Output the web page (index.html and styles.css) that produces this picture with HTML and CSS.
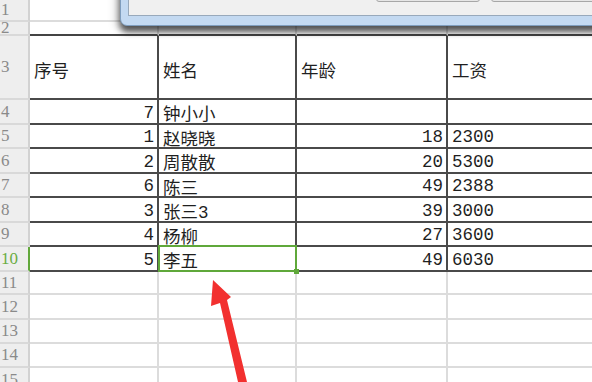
FILE: index.html
```html
<!DOCTYPE html>
<html lang="zh">
<head>
<meta charset="utf-8">
<title>表格</title>
<link rel="stylesheet" href="styles.css">
</head>
<body>
<div class="sheet">
  <div class="rh">1</div><div class="c"></div><div class="c"></div><div class="c"></div><div class="c"></div>
  <div class="rh">2</div><div class="c top"></div><div class="c top"></div><div class="c top"></div><div class="c top"></div>

  <div class="rh">3</div><div class="c d head">序号</div><div class="c d head">姓名</div><div class="c d head">年龄</div><div class="c d head">工资</div>
  <div class="rh">4</div><div class="c d num">7</div><div class="c d">钟小小</div><div class="c d num"></div><div class="c d"></div>
  <div class="rh">5</div><div class="c d num">1</div><div class="c d">赵晓晓</div><div class="c d num">18</div><div class="c d">2300</div>
  <div class="rh">6</div><div class="c d num">2</div><div class="c d">周散散</div><div class="c d num">20</div><div class="c d">5300</div>
  <div class="rh">7</div><div class="c d num">6</div><div class="c d">陈三</div><div class="c d num">49</div><div class="c d">2388</div>
  <div class="rh">8</div><div class="c d num">3</div><div class="c d">张三3</div><div class="c d num">39</div><div class="c d">3000</div>
  <div class="rh">9</div><div class="c d num">4</div><div class="c d">杨柳</div><div class="c d num">27</div><div class="c d">3600</div>
  <div class="rh active">10</div><div class="c d num">5</div><div class="c d selected">李五</div><div class="c d num">49</div><div class="c d">6030</div>

  <div class="rh">11</div><div class="c"></div><div class="c"></div><div class="c"></div><div class="c"></div>
  <div class="rh">12</div><div class="c"></div><div class="c"></div><div class="c"></div><div class="c"></div>
  <div class="rh">13</div><div class="c"></div><div class="c"></div><div class="c"></div><div class="c"></div>
  <div class="rh">14</div><div class="c"></div><div class="c"></div><div class="c"></div><div class="c"></div>
  <div class="rh">15</div><div class="c"></div><div class="c"></div><div class="c"></div><div class="c"></div>
</div>

<div class="dialog">
  <div class="dialog-body">
    <div class="btn btn-a"></div>
    <div class="btn btn-b"></div>
  </div>
</div>

<svg class="arrow" width="592" height="382" viewBox="0 0 592 382">
  <polygon points="213,280 231,297 227,300 247,382 238,382 220,303 211,306" fill="#f2302f"/>
</svg>
</body>
</html>
```

FILE: styles.css
```css
html, body {
  margin: 0;
  padding: 0;
  width: 592px;
  height: 382px;
  overflow: hidden;
  background: #ffffff;
}

.sheet {
  display: grid;
  grid-template-columns: 30px 129px 138px 151px 160px;
  grid-template-rows: 22px 14px 64px 25px 24px 25px 24px 25px 24px 25px 23px 25px 24px 24px 26px;
  font-family: "Liberation Mono", "Noto Sans CJK SC", monospace;
  font-size: 17.5px;
  color: #1f1f1f;
}

.rh {
  box-sizing: border-box;
  background: #eeeeee;
  border-right: 2px solid #d2d2d2;
  border-bottom: 2px solid #d9d9d9;
  color: #8a8a8a;
  font-family: "Liberation Serif", serif;
  font-size: 17px;
  padding-left: 1px;
  display: flex;
  align-items: center;
  overflow: hidden;
}

.rh.active {
  color: #6aac43;
  border-right-color: #62a83c;
}

.c {
  box-sizing: border-box;
  border-right: 2px solid #dcdcdc;
  border-bottom: 2px solid #dcdcdc;
  display: flex;
  align-items: center;
  padding: 2px 3px 0 4px;
  white-space: nowrap;
  overflow: visible;
}

.c.top {
  border-bottom-color: #444444;
}

.c.d {
  border-right-color: #4a4a4a;
  border-bottom-color: #4a4a4a;
}

.c.head {
  padding-top: 4px;
}

.c.num {
  justify-content: flex-end;
  padding-right: 3px;
}

.c.selected {
  position: relative;
}

.c.selected::after {
  content: "";
  position: absolute;
  left: -1px;
  top: -2px;
  right: -2px;
  bottom: -2px;
  border: 2px solid #5fa83a;
}

.c.selected::before {
  content: "";
  position: absolute;
  right: -4px;
  bottom: -4px;
  width: 5px;
  height: 5px;
  background: #5fa83a;
  z-index: 1;
}

.dialog {
  position: absolute;
  left: 120px;
  top: -40px;
  width: 520px;
  height: 64px;
  background: #c3d9f1;
  border: 1px solid #7f9dbd;
  border-radius: 7px;
  box-shadow: 0 6px 6px rgba(0, 0, 0, 0.6), -3px 3px 10px rgba(0, 0, 0, 0.25);
}

.dialog-body {
  position: absolute;
  left: 7px;
  right: 0;
  top: 0;
  bottom: 9px;
  background: #f0f0f0;
  border-left: 1px solid #98a9bb;
  border-bottom: 1px solid #98a9bb;
}

.btn {
  position: absolute;
  bottom: 13px;
  height: 22px;
  background: #e6e6e6;
  border: 1px solid #a7a7a7;
  border-radius: 3px;
}

.btn-a {
  left: 247px;
  width: 102px;
}

.btn-b {
  left: 362px;
  width: 130px;
}

.arrow {
  position: absolute;
  left: 0;
  top: 0;
  pointer-events: none;
}
```
